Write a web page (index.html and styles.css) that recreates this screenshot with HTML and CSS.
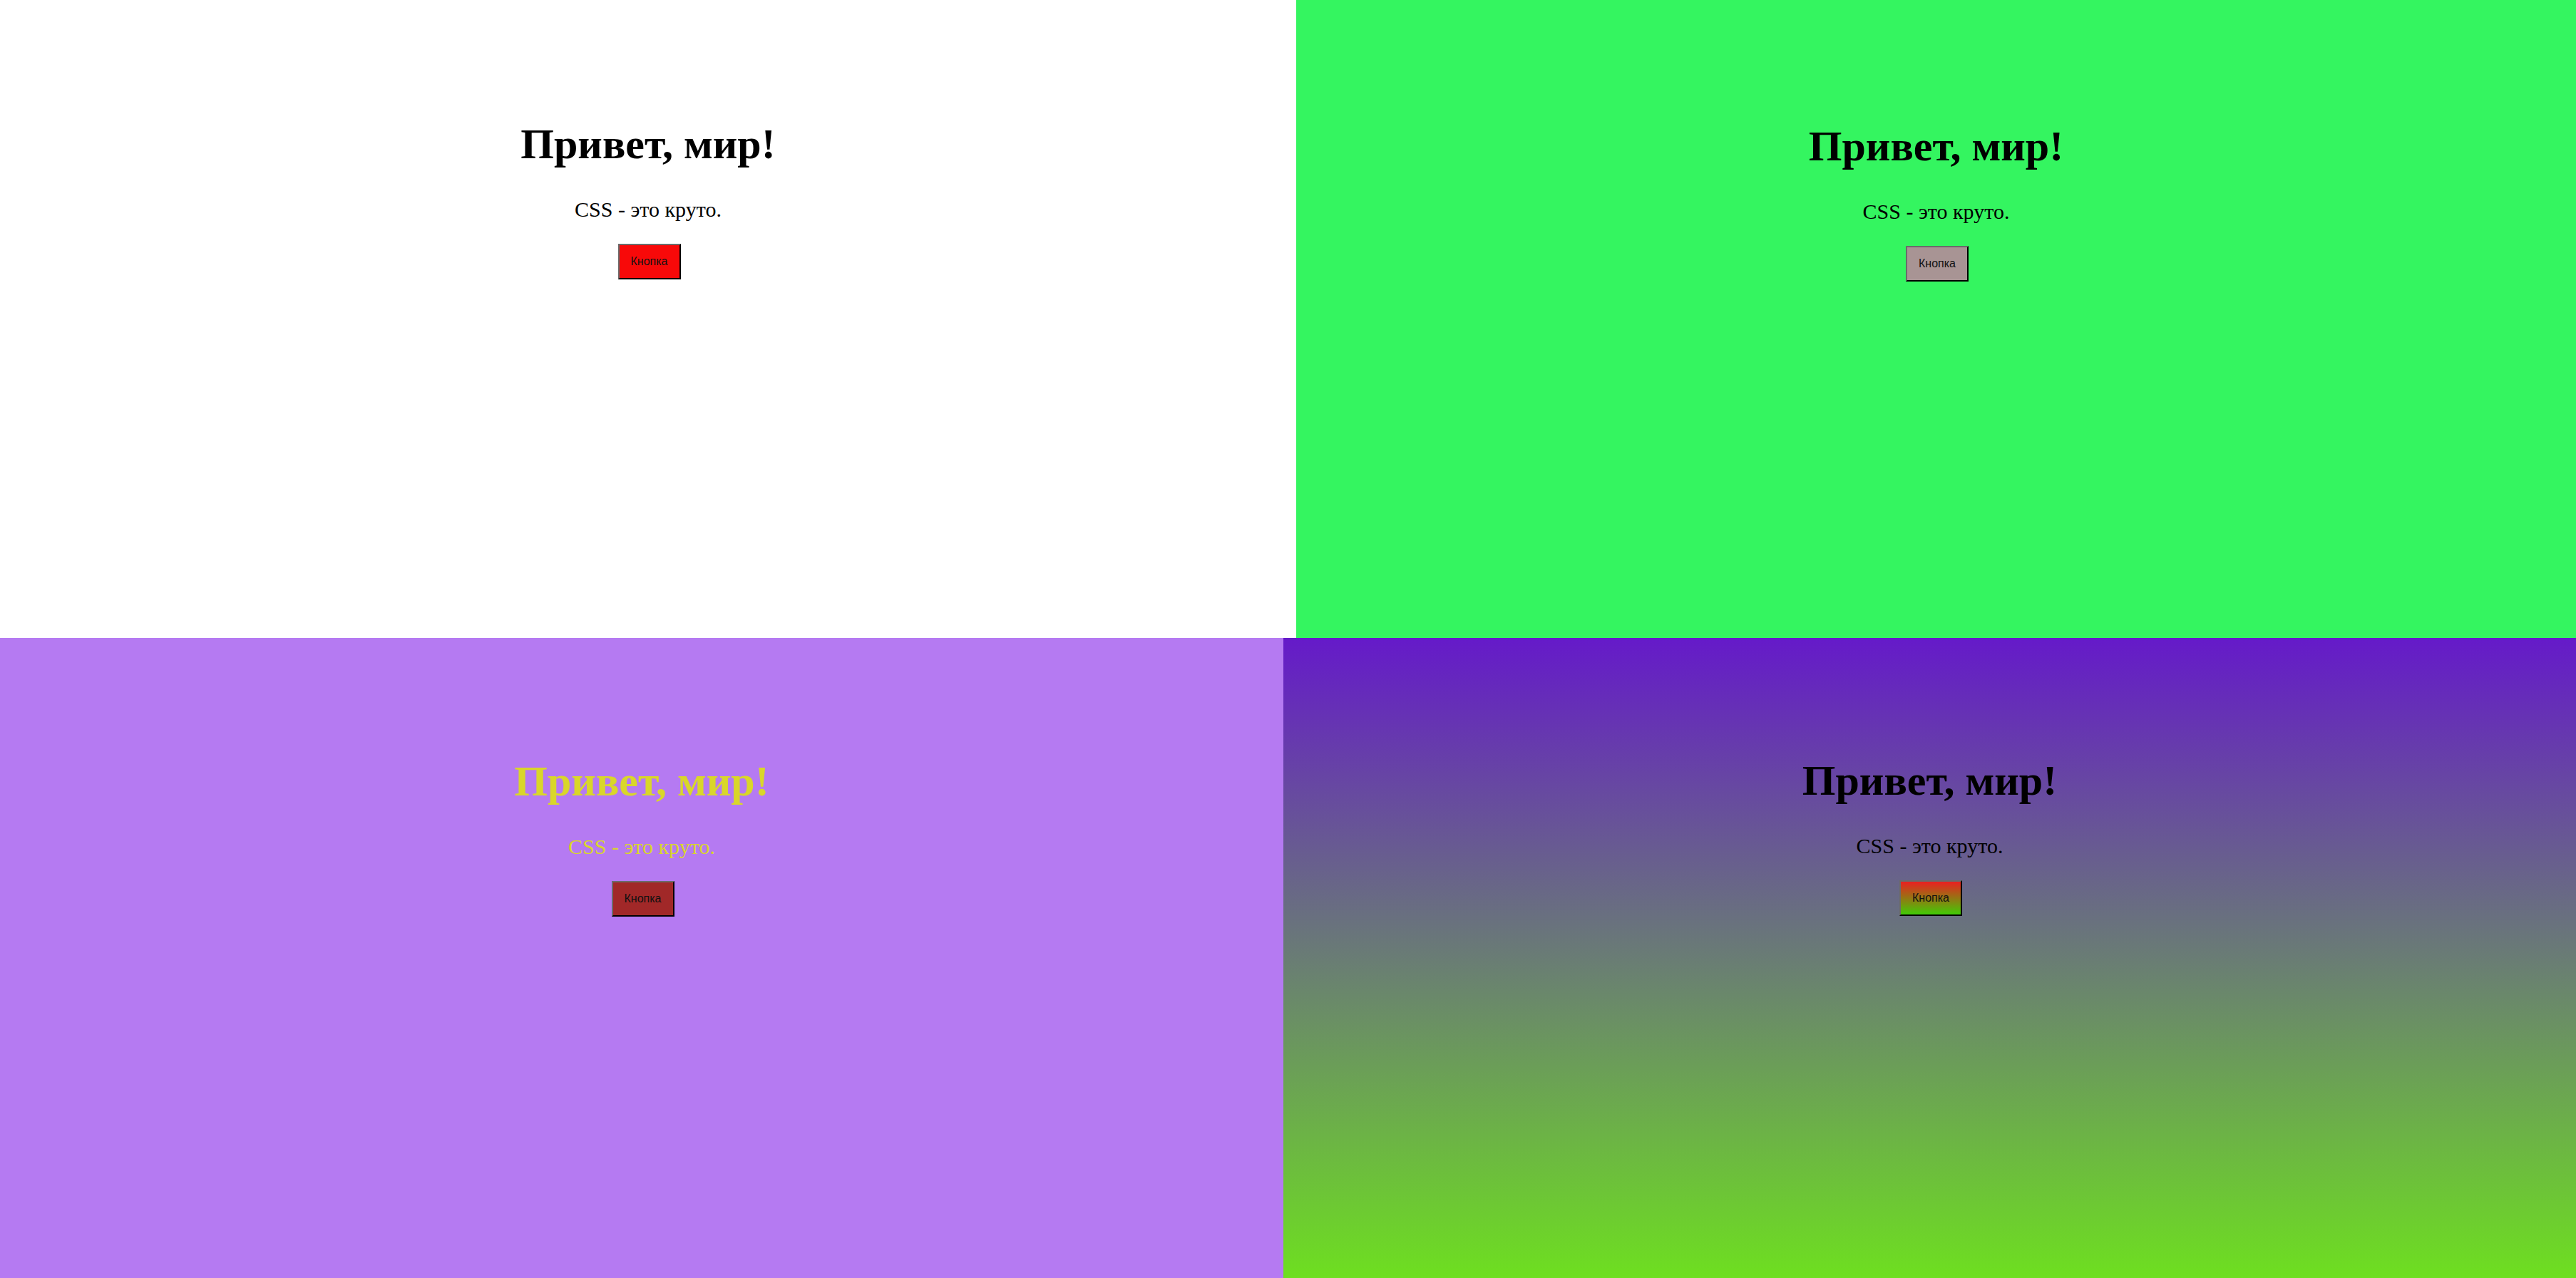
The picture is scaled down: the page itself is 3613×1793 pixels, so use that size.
FILE: index.html
```html
<!DOCTYPE html>
<html lang="ru">
<head>
<meta charset="utf-8">
<title>Привет, мир!</title>
<link rel="stylesheet" href="styles.css">
</head>
<body>
<main class="mosaic">
  <div class="row row-top">
    <section class="pane pane-white">
      <h1 class="title">Привет, мир!</h1>
      <p class="lead">CSS - это круто.</p>
      <button class="btn btn-red">Кнопка</button>
    </section>
    <section class="pane pane-green">
      <h1 class="title">Привет, мир!</h1>
      <p class="lead">CSS - это круто.</p>
      <button class="btn btn-gray">Кнопка</button>
    </section>
  </div>
  <div class="row row-bottom">
    <section class="pane pane-purple">
      <h1 class="title">Привет, мир!</h1>
      <p class="lead">CSS - это круто.</p>
      <button class="btn btn-brown">Кнопка</button>
    </section>
    <section class="pane pane-gradient">
      <h1 class="title">Привет, мир!</h1>
      <p class="lead">CSS - это круто.</p>
      <button class="btn btn-fade">Кнопка</button>
    </section>
  </div>
</main>
</body>
</html>
```

FILE: styles.css
```css
* { box-sizing: border-box; }

html, body {
  margin: 0;
  padding: 0;
  width: 3613px;
  height: 1793px;
  overflow: hidden;
}

.mosaic {
  display: flex;
  flex-direction: column;
  width: 3613px;
  height: 1793px;
}

.row {
  display: flex;
}

.row-top { height: 895px; }
.row-bottom { height: 898px; }

.pane {
  display: flex;
  flex-direction: column;
  align-items: center;
  text-align: center;
  padding-top: 168px;
  font-family: "Liberation Serif", "Times New Roman", serif;
  color: #000;
}

.pane-white { width: 1818px; background: #ffffff; }
.pane-green { width: 1795px; background: #34f560; padding-top: 171px; }
.pane-purple { width: 1800px; background: #b57af2; color: #d9d62a; padding-top: 167px; }
.pane-gradient { width: 1813px; background: linear-gradient(to bottom, #651ac9, #6edf20); padding-top: 166px; }

.title {
  margin: 0;
  font-size: 60px;
  font-weight: bold;
  line-height: 69px;
}

.lead {
  margin: 40px 0 0;
  font-size: 30px;
  line-height: 34.5px;
}

.btn {
  margin-top: 30px;
  margin-left: 3px;
  width: 88px;
  height: 50px;
  padding: 0;
  font-family: "Liberation Sans", Arial, sans-serif;
  font-size: 16px;
  line-height: 18px;
  color: #111;
  border-width: 2px;
  border-style: solid;
  border-color: #6b6b6b #000 #000 #6b6b6b;
  cursor: pointer;
}

.btn-red { background: #f80909; }
.btn-gray { background: #a89494; }
.btn-brown { background: #a12828; }
.btn-fade { background: linear-gradient(to bottom, #ea2020, #40cc06); }
```
